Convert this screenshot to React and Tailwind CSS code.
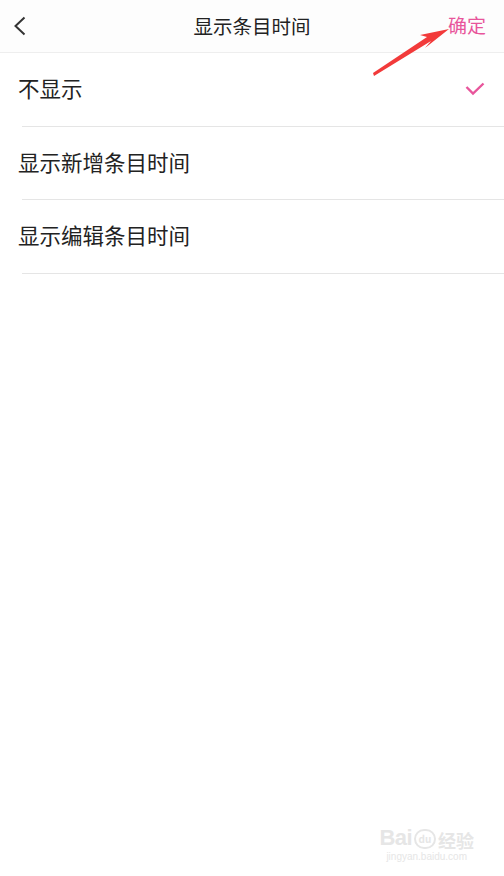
export default function App() {
  const font = { fontFamily: '"Noto Sans CJK SC", "Noto Sans", sans-serif' };
  const rows = ["不显示", "显示新增条目时间", "显示编辑条目时间"];
  return (
    <div className="relative w-[504px] h-[876px] bg-white overflow-hidden" style={font}>
      <div className="relative h-[53px] flex items-center justify-center border-b border-[#eeeeee] bg-[#fdfdfd]">
        <svg className="absolute left-[13px] top-[16px]" width="14" height="20" viewBox="0 0 14 20">
          <path d="M11.5 1.5 L2.5 10 L11.5 18.5" fill="none" stroke="#333" strokeWidth="2" />
        </svg>
        <span className="text-[19.5px] text-[#222] leading-none">显示条目时间</span>
        <span className="absolute right-[18px] top-[15px] text-[19px] text-[#e8559b] leading-none">确定</span>
      </div>
      <div>
        {rows.map((r, i) => (
          <div key={r} className="relative h-[73.5px] flex items-center pl-[18px] pb-[4px]">
            <span className="text-[21.5px] text-[#222] leading-none">{r}</span>
            {i === 0 && (
              <svg className="absolute right-[19px] top-[29px]" width="20" height="14" viewBox="0 0 20 14">
                <path d="M1.5 5 L8 11.5 L18.5 1.5" fill="none" stroke="#e8559b" strokeWidth="2.4" />
              </svg>
            )}
            <div className="absolute left-[22px] right-0 bottom-0 h-px bg-[#e5e5e5]" />
          </div>
        ))}
      </div>
      <svg className="absolute left-0 top-0 pointer-events-none" width="504" height="120" viewBox="0 0 504 120">
        <polygon points="374,76 431,41 425,48 449,29 420,35 427,37 373,73" fill="#f23a3a" />
      </svg>
      <div className="absolute right-[30px] bottom-[14px] flex flex-col items-center text-[#e6e6e6] leading-none">
        <div className="flex items-end gap-[2px]">
          <span className="text-[22px] font-bold tracking-tight" style={{ fontFamily: '"Liberation Sans", sans-serif' }}>Bai</span>
          <span className="w-[22px] h-[20px] rounded-full border-2 border-[#e6e6e6] text-[10px] flex items-center justify-center font-bold">du</span>
          <span className="text-[18px] font-bold">经验</span>
        </div>
        <span className="text-[10px] mt-[3px]" style={{ fontFamily: '"Liberation Sans", sans-serif' }}>jingyan.baidu.com</span>
      </div>
    </div>
  );
}
